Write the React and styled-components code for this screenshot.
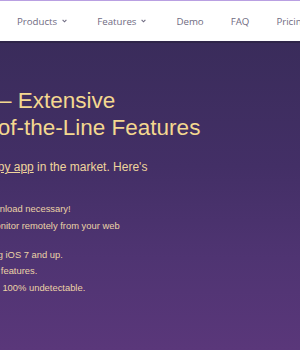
import React from 'react';
import styled, { createGlobalStyle } from 'styled-components';

const GlobalStyle = createGlobalStyle`
  html, body {
    margin: 0;
    padding: 0;
    overflow: hidden;
    background: #ffffff;
  }
`;

const Page = styled.div`
  width: 300px;
  height: 350px;
  overflow: hidden;
  display: flex;
  flex-direction: column;
`;

const Header = styled.header`
  height: 40px;
  flex-shrink: 0;
  background: #ffffff;
  border-top: 1px solid #b9a0e2;
  display: flex;
  align-items: center;
  padding-left: 17px;
`;

const NavItem = styled.a`
  display: flex;
  align-items: center;
  font-family: 'Open Sans', sans-serif;
  font-size: 9.7px;
  color: #6f6b82;
  white-space: nowrap;
  text-decoration: none;
  margin-right: 27px;
  padding-right: ${(p) => (p.$dropdown ? '3px' : '0')};

  svg {
    margin-left: 5px;
  }
`;

const Hero = styled.section`
  flex: 1;
  border-top: 2px solid #2f2549;
  background: linear-gradient(180deg, #3a2c5b 0%, #432f66 40%, #4f3472 70%, #5a377a 100%);
  padding-top: 44px;
`;

const Content = styled.div`
  margin-left: -46px;
  font-family: 'Liberation Sans', Arial, sans-serif;
  white-space: nowrap;
`;

const Title = styled.h1`
  margin: 0;
  font-size: 22.5px;
  line-height: 27px;
  font-weight: 400;
  color: #f4d890;
`;

const Lead = styled.p`
  margin: 18px 0 0 -3px;
  font-size: 12px;
  line-height: 17px;
  color: #efd59c;

  a {
    color: inherit;
    text-decoration: underline;
  }
`;

const List = styled.ul`
  list-style: none;
  margin: 25px 0 0 14px;
  padding: 0;
  font-size: 9.4px;
  line-height: 16.6px;
  color: #ebd3a6;
`;

const Item = styled.li`
  margin-top: ${(p) => (p.$gap ? '12.6px' : '0')};
`;

const Chevron = () => (
  <svg width="5" height="4" viewBox="0 0 5 4" fill="none">
    <path d="M0.6 0.8 L2.5 2.8 L4.4 0.8" stroke="#6f6b82" strokeWidth="1.1" />
  </svg>
);

const navLinks = [
  { label: 'Products', dropdown: true },
  { label: 'Features', dropdown: true },
  { label: 'Demo' },
  { label: 'FAQ' },
  { label: 'Pricing' },
];

const features = [
  { text: 'No download necessary!' },
  { text: 'Just monitor remotely from your web' },
  { text: 'Running iOS 7 and up.', gap: true },
  { text: 'Tons of features.' },
  { text: 'Stealth, 100% undetectable.' },
];

const App = () => (
  <Page>
    <GlobalStyle />
    <Header>
      {navLinks.map((l) => (
        <NavItem key={l.label} $dropdown={l.dropdown}>
          {l.label}
          {l.dropdown && <Chevron />}
        </NavItem>
      ))}
    </Header>
    <Hero>
      <Content>
        <Title>
          Spy – Extensive
          <br />
          Top-of-the-Line Features
        </Title>
        <Lead>
          The #1 <a>spy app</a> in the market. Here's
        </Lead>
        <List>
          {features.map((f) => (
            <Item key={f.text} $gap={f.gap}>
              {f.text}
            </Item>
          ))}
        </List>
      </Content>
    </Hero>
  </Page>
);

export default App;
